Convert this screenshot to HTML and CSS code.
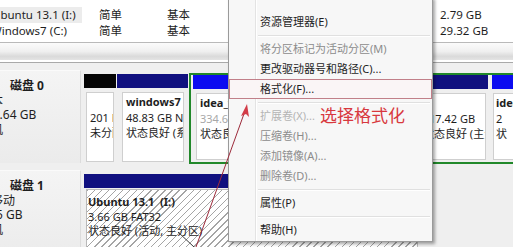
FILE: index.html
```html
<!DOCTYPE html>
<html lang="zh-CN">
<head>
<meta charset="utf-8">
<title>磁盘管理</title>
<link rel="stylesheet" href="styles.css">
</head>
<body>
<div class="screen">
  <div class="vol-list">
    <div class="vrow">
      <div class="vname sel"><span class="clip c1">Ubuntu 13.1 (I:)</span></div>
      <div class="vcol">简单</div>
      <div class="vcol">基本</div>
      <div class="vsize">2.79 GB</div>
    </div>
    <div class="vrow">
      <div class="vname"><span class="clip c2">Windows7 (C:)</span></div>
      <div class="vcol">简单</div>
      <div class="vcol">基本</div>
      <div class="vsize">29.32 GB</div>
    </div>
  </div>
  <div class="hscroll"></div>
  <div class="disks">
    <div class="disk">
      <div class="dlabel">
        <div class="dl-title">磁盘 0</div>
        <div class="dl-line">基本</div>
        <div class="dl-line">465.64 GB</div>
        <div class="dl-line">联机</div>
      </div>
      <div class="parts">
        <div class="part p-unalloc">
          <div class="hdr hdr-black"></div>
          <div class="body"><div class="ln">&nbsp;</div><div class="ln">201 MB</div><div class="ln">未分配</div></div>
        </div>
        <div class="part p-win7">
          <div class="hdr hdr-navy"></div>
          <div class="body"><div class="ln b">windows7</div><div class="ln">48.83 GB NTFS</div><div class="ln">状态良好 (系统, 启动)</div></div>
        </div>
        <div class="ext">
          <div class="part p-idea">
            <div class="hdr hdr-blue"></div>
            <div class="body"><div class="ln b">idea_work (D:)</div><div class="ln faded">334.64 GB NTFS</div><div class="ln">状态良好 (逻辑驱动器)</div></div>
          </div>
          <div class="part p-742">
            <div class="hdr hdr-navy"></div>
            <div class="body"><div class="ln">&nbsp;</div><div class="ln ind">17.42 GB</div><div class="ln">状态良好 (主分区)</div></div>
          </div>
          <div class="part p-last">
            <div class="hdr hdr-blue"></div>
            <div class="body"><div class="ln b">idea</div><div class="ln">2</div><div class="ln">状</div></div>
          </div>
        </div>
      </div>
    </div>
    <div class="disk">
      <div class="dlabel">
        <div class="dl-title">磁盘 1</div>
        <div class="dl-line">可移动</div>
        <div class="dl-line">3.75 GB</div>
        <div class="dl-line">联机</div>
      </div>
      <div class="parts">
        <div class="part p-ubuntu">
          <div class="hdr hdr-navy"></div>
          <div class="body hatched"><div class="ln b">Ubuntu 13.1&nbsp; (I:)</div><div class="ln">3.66 GB FAT32</div><div class="ln">状态良好 (活动, 主分区)</div></div>
        </div>
      </div>
    </div>
  </div>

  <div class="menu">
    <div class="mi">资源管理器(E)</div>
    <div class="msep"></div>
    <div class="mi dis">将分区标记为活动分区(M)</div>
    <div class="mi">更改驱动器号和路径(C)...</div>
    <div class="mi hl">格式化(F)...</div>
    <div class="msep"></div>
    <div class="mi dis faint">扩展卷(X)...</div>
    <div class="mi dis">压缩卷(H)...</div>
    <div class="mi dis">添加镜像(A)...</div>
    <div class="mi dis">删除卷(D)...</div>
    <div class="msep"></div>
    <div class="mi">属性(P)</div>
    <div class="msep"></div>
    <div class="mi">帮助(H)</div>
  </div>

  <div class="note">选择格式化</div>
  <svg class="arrow" width="513" height="247" viewBox="0 0 513 247">
    <line x1="245" y1="111" x2="196" y2="247" stroke="#9c2a3a" stroke-width="1"/>
    <polygon points="247,104 241,116 246,114 249,117" fill="#d23c48"/>
    <line x1="178" y1="232" x2="194" y2="247" stroke="#3a3a3a" stroke-width="1"/>
  </svg>
</div>
</body>
</html>
```

FILE: styles.css
```css
* { box-sizing: border-box; }
html, body { margin: 0; padding: 0; }
body {
  width: 513px;
  height: 247px;
  overflow: hidden;
  background: #efefef;
  font-family: "Noto Sans", "Noto Sans CJK SC", sans-serif;
  font-size: 12px;
  color: #1e1e1e;
}
.screen {
  position: relative;
  width: 513px;
  height: 247px;
  overflow: hidden;
}

/* volume list */
.vol-list {
  height: 42px;
  background: #fff;
  padding-top: 7px;
  font-size: 11.5px;
}
.vrow {
  display: grid;
  grid-template-columns: 82px 68px 290px 1fr;
  height: 16px;
  line-height: 16px;
  white-space: nowrap;
}
.vname { overflow: hidden; }
.vname.sel { background: #ececec; }
.clip { display: inline-block; }
.clip.c1 { margin-left: -8px; }
.clip.c2 { margin-left: -9px; }
.vcol { padding-left: 17px; }

.hscroll {
  height: 21px;
  border-top: 1px solid #b9b9b9;
  border-bottom: 1px solid #a9a9a9;
  background: linear-gradient(#fbfbfb 0, #efefef 45%, #dadada 70%, #e9e9e9 100%);
  box-shadow: inset 0 -2px 0 #fff;
}

/* disks */
.disks {
  padding-top: 7px;
  background: #efefef;
}
.disk {
  display: flex;
  height: 93px;
  margin-bottom: 7px;
}
.dlabel {
  width: 81px;
  flex: none;
  overflow: hidden;
  white-space: nowrap;
  padding-top: 8px;
  line-height: 14.5px;
  font-size: 12px;
  background: linear-gradient(#f4f4f4, #ebebeb);
  border-top: 1px solid #fafafa;
  border-right: 1px solid #dcdcdc;
}
.dl-title { font-weight: bold; padding-left: 10px; }
.dl-line { margin-left: -21px; }

.parts {
  flex: 1;
  display: flex;
  padding-left: 3px;
  min-width: 0;
}
.part {
  display: flex;
  flex-direction: column;
  flex: none;
  margin-top: 4px;
  height: 89px;
  overflow: hidden;
}
.hdr { height: 14px; flex: none; }
.hdr-black { background: #050505; }
.hdr-navy { background: #10107f; }
.hdr-blue { background: #0c0cf0; }
.body {
  flex: 1;
  margin: 4px 2px 1px;
  background: #fff;
  border: 1px solid #cfcfcf;
  padding: 1px 0 0 3px;
  font-size: 11px;
  line-height: 15.5px;
  white-space: nowrap;
  overflow: hidden;
}
.ln.b { font-weight: bold; }
.ln.faded { color: #a8a8a8; }
.ln.ind { padding-left: 6px; }

.p-unalloc { width: 32px; }
.p-win7 { width: 71px; margin-left: 1px; }
.p-win7 .body { margin: 4px 4px 1px 5px; }

.ext {
  display: flex;
  margin: 3px 0 0 1px;
  height: 91px;
  border: 2px solid #21882a;
  border-right: none;
  padding-left: 2px;
  flex: 1;
  min-width: 0;
}
.ext .part { margin-top: 0; height: 86px; }
.p-idea { width: 223px; }
.p-idea .body { margin-left: 3px; }
.p-742 { width: 70px; margin-left: 2px; }
.p-742 .body { padding-left: 2px; }
.p-last { width: 40px; margin-left: 4px; }
.p-last .body { margin-left: 1px; padding-left: 2px; }

.p-ubuntu { width: 336px; }
.p-ubuntu .body { margin: 1px 2px 0; padding: 5px 0 0 1px; line-height: 14.5px; border-color: #b9b9b9; }
.hatched {
  background: repeating-linear-gradient(135deg, #a5a5a5 0 1px, #ffffff 1px 5px);
}

/* context menu */
.menu {
  position: absolute;
  left: 228px;
  top: -3px;
  width: 205px;
  padding: 14px 0 1px;
  background:
    linear-gradient(to right, transparent 26px, #e3e3e3 26px, #e3e3e3 27px, #ffffff 27px, #ffffff 28px, transparent 28px),
    #f7f7f7;
  border: 1px solid #9a9a9a;
  box-shadow: 2px 2px 3px rgba(0, 0, 0, 0.35);
  font-family: "Noto Sans", "Noto Sans CJK SC", sans-serif;
  font-size: 11px;
}
.mi {
  height: 20px;
  line-height: 20px;
  padding-left: 31px;
  white-space: nowrap;
  color: #1e1e1e;
}
.mi.dis { color: #8c8c8c; }
.mi.faint { color: #b4b4b4; }
.mi.hl {
  background: #faf5f6;
  box-shadow: inset 0 0 0 1px #c17f89;
}
.msep {
  margin: 3px 2px 2px 29px;
  height: 2px;
  border-top: 1px solid #e0e0e0;
  border-bottom: 1px solid #ffffff;
}

.note {
  position: absolute;
  left: 320px;
  top: 104px;
  font-family: "Noto Sans CJK SC", sans-serif;
  font-size: 17px;
  line-height: 22px;
  color: #d8383e;
}
.arrow {
  position: absolute;
  left: 0;
  top: 0;
  pointer-events: none;
}
```
